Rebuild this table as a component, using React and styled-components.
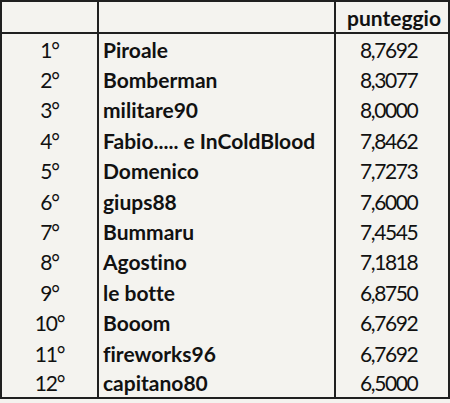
import styled, { createGlobalStyle } from "styled-components";

const GlobalStyle = createGlobalStyle`
  html, body {
    margin: 0;
    padding: 0;
    background: #f4f3ef;
  }
`;

const Table = styled.table`
  width: 450px;
  border-collapse: collapse;
  table-layout: fixed;
  border: 2px solid #1f1f1f;
  background: #f4f3ef;
  font-family: Lato, "Open Sans", sans-serif;
  font-size: 21px;
  font-variant-ligatures: none;
  color: #111;
`;

const HeadCell = styled.th`
  height: 30px;
  padding: 0 0 0 4px;
  font-weight: 700;
  text-align: center;
  border-right: 2px solid #1f1f1f;
  border-bottom: 2px solid #1f1f1f;
  &:last-child {
    border-right: none;
  }
`;

const Row = styled.tr`
  height: 30.4px;
`;

const RankCell = styled.td`
  padding: 2px 0 0;
  text-align: center;
  letter-spacing: -1.2px;
  border-right: 2px solid #1f1f1f;
`;

const NameCell = styled.td`
  padding: 2px 0 0 4px;
  font-weight: 700;
  white-space: nowrap;
  border-right: 2px solid #1f1f1f;
`;

const ScoreCell = styled.td`
  padding: 2px 0 0 24px;
  text-align: left;
  letter-spacing: -1.4px;
`;

const rows = [
  ["Piroale", "8,7692"],
  ["Bomberman", "8,3077"],
  ["militare90", "8,0000"],
  ["Fabio..... e InColdBlood", "7,8462"],
  ["Domenico", "7,7273"],
  ["giups88", "7,6000"],
  ["Bummaru", "7,4545"],
  ["Agostino", "7,1818"],
  ["le botte", "6,8750"],
  ["Booom", "6,7692"],
  ["fireworks96", "6,7692"],
  ["capitano80", "6,5000"],
];

export default function App() {
  return (
    <>
      <GlobalStyle />
      <Table>
        <colgroup>
          <col style={{ width: 97 }} />
          <col style={{ width: 237 }} />
          <col />
        </colgroup>
        <thead>
          <tr>
            <HeadCell />
            <HeadCell />
            <HeadCell>punteggio</HeadCell>
          </tr>
        </thead>
        <tbody>
          {rows.map(([name, score], i) => (
            <Row key={i}>
              <RankCell>{i + 1}°</RankCell>
              <NameCell>{name}</NameCell>
              <ScoreCell>{score}</ScoreCell>
            </Row>
          ))}
        </tbody>
      </Table>
    </>
  );
}
